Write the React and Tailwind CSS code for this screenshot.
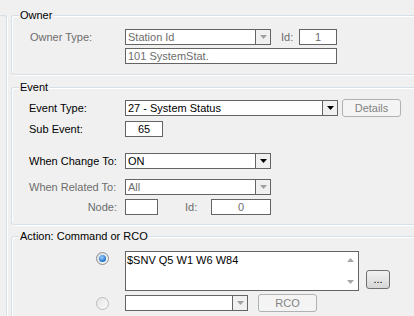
import React from 'react';

const font = { fontFamily: '"Liberation Sans", Arial, sans-serif' };

const Arrow = ({ color = '#000' }) => (
  <svg width="7" height="4" viewBox="0 0 7 4">
    <polygon points="0,0 7,0 3.5,4" fill={color} />
  </svg>
);

const Combo = ({ width, value, disabled }) => (
  <div className={`flex h-[16px] shrink-0 border border-[#646464] bg-white ${width}`}>
    <div className={`flex-1 pl-[2px] leading-[14px] ${disabled ? 'text-[#6d6d6d]' : 'text-black'}`}>{value}</div>
    <div className="flex w-[15px] items-center justify-center border-l border-[#646464] bg-[#f0f0f0]">
      <Arrow color={disabled ? '#a0a0a0' : '#000'} />
    </div>
  </div>
);

const Field = ({ width, value, center, disabled }) => (
  <div
    className={`h-[16px] shrink-0 border border-[#646464] bg-white leading-[14px] ${width} ${center ? 'text-center' : 'pl-[2px]'} ${disabled ? 'text-[#6d6d6d]' : 'text-black'}`}
  >
    {value}
  </div>
);

const Button = ({ width, label, disabled }) => (
  <div
    className={`flex h-[18px] shrink-0 items-center justify-center rounded-[3px] border ${width} ${
      disabled
        ? 'border-[#adb2b5] bg-[#f4f4f4] text-[#838383]'
        : 'border-[#707070] bg-gradient-to-b from-[#f2f2f2] to-[#d6d6d6] text-black'
    }`}
  >
    {label}
  </div>
);

const Radio = ({ checked }) => (
  <div
    className={`flex h-[13px] w-[13px] items-center justify-center rounded-full border ${
      checked ? 'border-[#8a8f94] bg-gradient-to-br from-[#dcdcdc] to-[#f6f6f6]' : 'border-[#bcbcbc] bg-gradient-to-br from-[#e6e6e6] to-[#fafafa]'
    }`}
  >
    {checked && <div className="h-[7px] w-[7px] rounded-full bg-[radial-gradient(circle_at_40%_35%,#9fd0ff,#1b6fc8_70%)]" />}
  </div>
);

const Group = ({ label, height, className = '', children }) => (
  <div
    className={`relative w-[440px] rounded-[3px] border border-[#d5dfe5] shadow-[inset_1px_1px_0_#fff,1px_1px_0_#fff] ${height} ${className}`}
  >
    <div className="absolute left-[7px] top-[-8px] bg-[#f0f0f0] px-[1px] leading-[14px] text-black">{label}</div>
    {children}
  </div>
);

export default function App() {
  return (
    <div className="flex h-[316px] w-[414px] overflow-hidden bg-[#f0f0f0] text-[11px]" style={font}>
      <div className="mt-[15px] w-[7px] shrink-0 rounded-tr-[3px] border-r border-t border-[#d5dfe5] shadow-[1px_1px_0_#fff]" />
      <div className="shrink-0 pl-[4px] pt-[15px]">
        <Group label="Owner" height="h-[60px]">
          <div className="pl-[18px] pt-[13px]">
            <div className="flex h-[16px] items-center">
              <div className="w-[95px] text-[#6d6d6d]">Owner Type:</div>
              <Combo width="w-[146px]" value="Station Id" disabled />
              <div className="ml-[10px] w-[18px] text-[#6d6d6d]">Id:</div>
              <Field width="w-[38px]" value="1" center disabled />
            </div>
            <div className="mt-[3px] flex">
              <div className="w-[95px]" />
              <Field width="w-[212px]" value="101 SystemStat." disabled />
            </div>
          </div>
        </Group>

        <Group label="Event" height="h-[138px]" className="mt-[12px]">
          <div className="pl-[17px] pt-[11px]">
            <div className="flex h-[18px] items-center">
              <div className="w-[96px] text-black">Event Type:</div>
              <Combo width="w-[213px]" value="27 - System Status" />
              <div className="ml-[4px]">
                <Button width="w-[59px]" label="Details" disabled />
              </div>
            </div>
            <div className="mt-[4px] flex h-[16px] items-center">
              <div className="w-[96px] text-black">Sub Event:</div>
              <Field width="w-[38px]" value="65" center />
            </div>
            <div className="mt-[16px] flex h-[16px] items-center">
              <div className="w-[96px] text-black">When Change To:</div>
              <Combo width="w-[146px]" value="ON" />
            </div>
            <div className="mt-[10px] flex h-[16px] items-center">
              <div className="w-[96px] text-[#6d6d6d]">When Related To:</div>
              <Combo width="w-[146px]" value="All" disabled />
            </div>
            <div className="mt-[4px] flex h-[16px] items-center">
              <div className="w-[96px] pr-[8px] text-right text-[#6d6d6d]">Node:</div>
              <Field width="w-[33px]" value="" />
              <div className="ml-[27px] w-[26px] text-[#6d6d6d]">Id:</div>
              <Field width="w-[60px]" value="0" center disabled />
            </div>
          </div>
        </Group>

        <Group label="Action: Command or RCO" height="h-[100px]" className="mt-[11px]">
          <div className="pt-[14px]">
            <div className="flex items-start">
              <div className="w-[113px] pl-[84px] pt-[1px]">
                <Radio checked />
              </div>
              <div className="flex h-[40px] w-[234px] border border-[#646464] bg-white">
                <div className="flex-1 pl-[1px] pt-[1px] leading-[14px] text-black">$SNV Q5 W1 W6 W84</div>
                <div className="flex w-[16px] flex-col items-center justify-between py-[6px]">
                  <svg width="7" height="4" viewBox="0 0 7 4">
                    <polygon points="0,4 7,4 3.5,0" fill="#a6a6a6" />
                  </svg>
                  <Arrow color="#a6a6a6" />
                </div>
              </div>
              <div className="ml-[7px] mt-[19px]">
                <Button width="w-[24px] h-[19px]" label="..." />
              </div>
            </div>
            <div className="mt-[3px] flex h-[18px] items-center">
              <div className="w-[113px] pl-[84px]">
                <Radio />
              </div>
              <Combo width="w-[123px]" value="" disabled />
              <div className="ml-[10px]">
                <Button width="w-[59px]" label="RCO" disabled />
              </div>
            </div>
          </div>
        </Group>
      </div>
    </div>
  );
}
